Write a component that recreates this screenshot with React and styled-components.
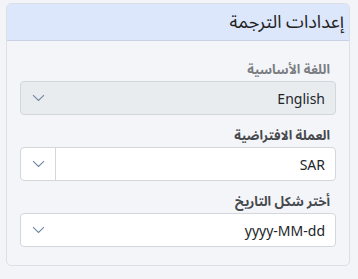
import React from 'react'
import styled, { createGlobalStyle } from 'styled-components'

const Global = createGlobalStyle`
body {
  margin: 0;
  background: #f3f4f8;
  font-family: "Noto Sans", "Noto Sans Arabic", "Noto Naskh Arabic", "DejaVu Sans", sans-serif;
}
`

const Page = styled.div`
padding: 3px 8px 12px 6px;
direction: rtl;
`

const Card = styled.div`
border: 1px solid #dcdfe5;
border-radius: 5px;
background: #f4f5f9;
overflow: hidden;
`

const Header = styled.div`
height: 36px;
background: #dde7fb;
border-bottom: 1px solid #c8d2e2;
display: flex;
align-items: center;
padding: 0 5px;
font-size: 18px;
color: #222;
`

const Body = styled.div`
padding: 17px 13px 18px;
display: flex;
flex-direction: column;
gap: 9px;
`

const Field = styled.div`
display: flex;
flex-direction: column;
gap: 1px;
`

const Label = styled.label`
font-size: 13px;
font-weight: 700;
color: ${p => (p.muted ? '#7a7d82' : '#45484c')};
padding-right: 6px;
height: 22px;
line-height: 22px;
`

const Select = styled.div`
height: 32px;
border: 1px solid #d3d7dc;
border-radius: 4px;
background: ${p => (p.disabled ? '#e9ecef' : '#fff')};
display: flex;
align-items: center;
font-size: 14px;
color: #212529;
`

const Value = styled.div`
flex: 1;
padding: 0 10px;
`

const Toggle = styled.div`
width: 34px;
height: 100%;
display: flex;
align-items: center;
justify-content: center;
border-right: ${p => (p.split ? '1px solid #d3d7dc' : 'none')};
`

const Chevron = () => (
  <svg width="13" height="8" viewBox="0 0 13 8">
    <path d="M1 1.2 L6.5 6.4 L12 1.2" fill="none" stroke="#6f86a6" strokeWidth="1.1" />
  </svg>
)

const fields = [
  { label: 'اللغة الأساسية', value: 'English', disabled: true },
  { label: 'العملة الافتراضية', value: 'SAR', split: true },
  { label: 'أختر شكل التاريخ', value: 'yyyy-MM-dd' },
]

const App = () => (
  <Page>
    <Global />
    <Card>
      <Header>إعدادات الترجمة</Header>
      <Body>
        {fields.map(f => (
          <Field key={f.label}>
            <Label muted={f.disabled}>{f.label}</Label>
            <Select disabled={f.disabled}>
              <Value>{f.value}</Value>
              <Toggle split={f.split}><Chevron /></Toggle>
            </Select>
          </Field>
        ))}
      </Body>
    </Card>
  </Page>
)

export default App
